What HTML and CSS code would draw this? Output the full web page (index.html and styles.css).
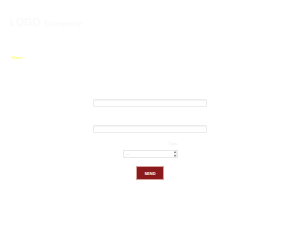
FILE: index.html
```html
<!DOCTYPE html>
<html>
<head>
<meta charset="utf-8">
<link rel="stylesheet" href="styles.css">
</head>
<body>
<header class="header">
  <div class="logo">LOGO <span class="logo-sub">Company</span></div>
  <nav class="nav"><a class="nav-link">Home</a></nav>
</header>
<main class="main">
  <form class="form">
    <div class="field"><input class="input" type="text"></div>
    <div class="field"><input class="input" type="text"></div>
    <div class="note">Topic</div>
    <div class="select-wrap">
      <select class="select"><option>---</option></select>
      <span class="select-arrow"><span class="arr-up"></span><span class="arr-down"></span></span>
    </div>
    <button class="btn" type="button">SEND</button>
  </form>
</main>
</body>
</html>
```
FILE: styles.css
```css
html, body { margin: 0; padding: 0; background: #fff; }
body { width: 300px; height: 225px; font-family: "Liberation Sans", Arial, sans-serif; overflow: hidden; }
.header { box-sizing: border-box; padding: 17px 10px 0; height: 47px; }
.logo { color: #f9f9f9; font-size: 10px; line-height: 12px; letter-spacing: 0.5px; }
.logo-sub { font-size: 8px; }
.nav { margin-top: 26px; font-size: 4px; line-height: 4px; }
.nav-link { color: #ffff66; font-size: 4px; font-weight: bold; margin-left: 2px; }
.main { display: flex; justify-content: center; }
.form { width: 114px; display: flex; flex-direction: column; align-items: center; padding-top: 52px; }
.field { width: 114px; margin-bottom: 18px; }
.input { display: block; box-sizing: border-box; width: 114px; height: 8px; border: 1px solid #ececec; border-radius: 1px; padding: 0; margin: 0; background: #fff; box-shadow: inset 0 1px 1px #f4f4f4; }
.note { align-self: flex-end; margin: -10px 29px 3px 0; font-size: 4px; line-height: 5px; color: #f0f0f0; height: 5px; }
.select-wrap { position: relative; width: 55px; height: 8px; margin: 1px 0 8px; }
.select { display: block; box-sizing: border-box; width: 55px; height: 8px; font-size: 4px; line-height: 6px; padding: 0 2px; border: 1px solid #e8e8e8; background: #fff; color: #c8c8c8; appearance: none; -webkit-appearance: none; border-radius: 0; font-family: "Liberation Sans", Arial, sans-serif; }
.select-arrow { position: absolute; right: 1px; top: 1px; width: 3px; height: 6px; background: #eee; display: flex; flex-direction: column; justify-content: space-between; align-items: center; padding: 0; }
.arr-up { width: 0; height: 0; border-left: 1px solid transparent; border-right: 1px solid transparent; border-bottom: 2px solid #777; }
.arr-down { width: 0; height: 0; border-left: 1px solid transparent; border-right: 1px solid transparent; border-top: 2px solid #777; }
.btn { width: 28px; height: 14px; background: #8b1a1d; color: #fff; border: 1px solid #d9a0a0; font-size: 4px; font-weight: bold; padding: 0; font-family: "Liberation Sans", Arial, sans-serif; }
```
